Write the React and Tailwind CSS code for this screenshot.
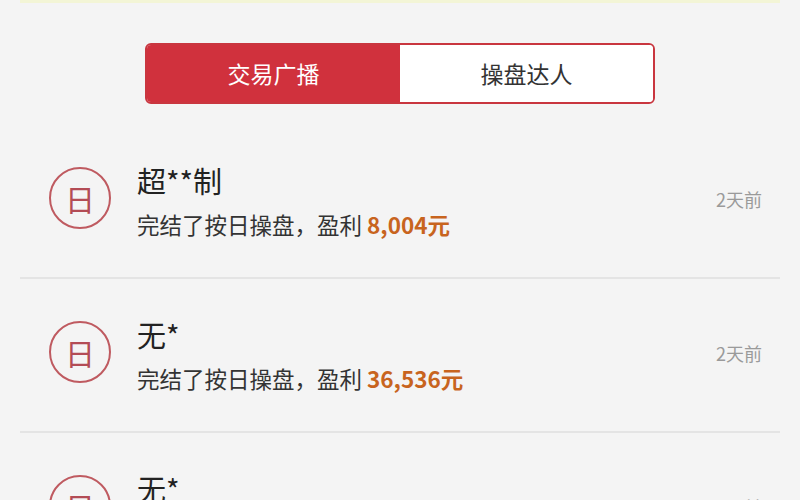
import React from 'react';

const rows = [
  { name: '超**制', amount: '8,004元', time: '2天前' },
  { name: '无*', amount: '36,536元', time: '2天前' },
  { name: '无*', amount: '12,800元', time: '2天前' },
];

const App = () => {
  return (
    <div
      className="w-[800px] h-[500px] overflow-hidden bg-[#f4f4f4]"
      style={{ fontFamily: '"Noto Sans CJK SC", "Noto Sans", sans-serif' }}
    >
      <div className="mx-[20px] h-[3px] bg-[#f3f5d6]" />
      <div className="flex justify-center pt-[40px]">
        <div className="flex w-[510px] h-[61px] rounded-[6px] border-2 border-[#c9363f] overflow-hidden">
          <div className="flex-1 flex items-center justify-center bg-[#d0313d] text-white text-[23px]">交易广播</div>
          <div className="flex-1 flex items-center justify-center bg-white text-[#333] text-[23px]">操盘达人</div>
        </div>
      </div>
      <div className="mt-[21px] mx-[20px]">
        {rows.map((r, i) => (
          <div key={i} className="flex items-center h-[154px] pb-[7px] border-b-2 border-[#e4e4e4]">
            <div className="ml-[29px] w-[62px] h-[62px] rounded-full border-2 border-[#bf5a60] flex items-center justify-center text-[#b34c55] text-[30px] leading-none shrink-0">
              日
            </div>
            <div className="ml-[26px] flex-1 flex flex-col pt-[8px]">
              <div className="text-[29px] leading-[36px] text-[#222]">{r.name}</div>
              <div className="text-[22.5px] leading-[36px] text-[#333] mt-[8px]">
                完结了按日操盘，盈利 <span className="text-[#c8641e] font-semibold">{r.amount}</span>
              </div>
            </div>
            <div className="mr-[18px] mt-[4px] text-[18px] text-[#9a9a9a]">{r.time}</div>
          </div>
        ))}
      </div>
    </div>
  );
};

export default App;
